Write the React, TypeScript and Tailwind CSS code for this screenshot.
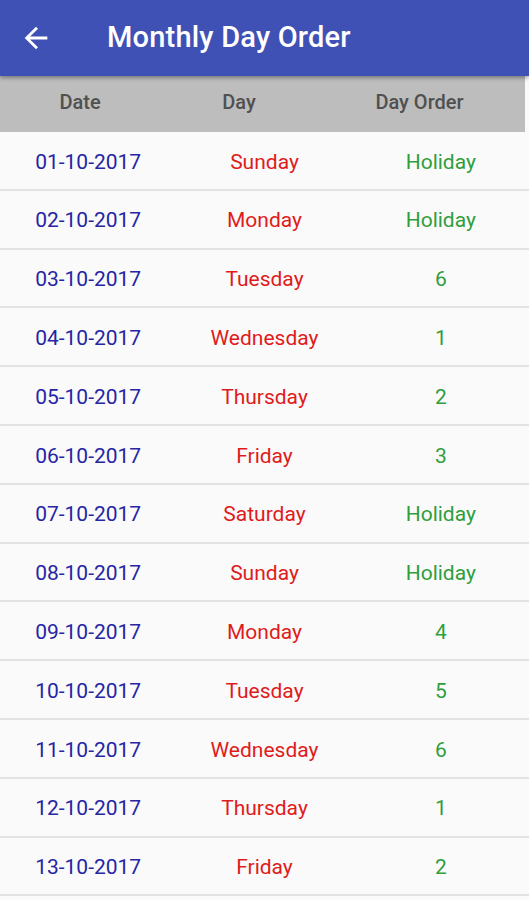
import React from 'react';

type Row = { date: string; day: string; order: string };

const rows: Row[] = [
  { date: '01-10-2017', day: 'Sunday', order: 'Holiday' },
  { date: '02-10-2017', day: 'Monday', order: 'Holiday' },
  { date: '03-10-2017', day: 'Tuesday', order: '6' },
  { date: '04-10-2017', day: 'Wednesday', order: '1' },
  { date: '05-10-2017', day: 'Thursday', order: '2' },
  { date: '06-10-2017', day: 'Friday', order: '3' },
  { date: '07-10-2017', day: 'Saturday', order: 'Holiday' },
  { date: '08-10-2017', day: 'Sunday', order: 'Holiday' },
  { date: '09-10-2017', day: 'Monday', order: '4' },
  { date: '10-10-2017', day: 'Tuesday', order: '5' },
  { date: '11-10-2017', day: 'Wednesday', order: '6' },
  { date: '12-10-2017', day: 'Thursday', order: '1' },
  { date: '13-10-2017', day: 'Friday', order: '2' },
];

const App: React.FC = () => {
  return (
    <div className="w-[529px] h-[900px] overflow-hidden bg-[#fafafa] font-['Roboto',sans-serif] select-none">
      {/* App bar */}
      <div className="relative z-10 h-[76px] bg-[#3f51b5] flex items-center shadow-[0_2px_4px_rgba(0,0,0,0.35)]">
        <div className="w-[72px] flex justify-center">
          <svg className="w-[34px] h-[34px] text-white" viewBox="0 0 24 24" fill="currentColor">
            <path d="M20 11H7.83l5.59-5.59L12 4l-8 8 8 8 1.41-1.41L7.83 13H20v-2z" />
          </svg>
        </div>
        <h1 className="ml-[35px] text-[29px] font-medium text-white tracking-[0.2px]">Monthly Day Order</h1>
      </div>

      {/* Column header */}
      <div className="w-[525px] h-[56px] pb-[4px] bg-[#bdbdbd] grid grid-cols-[160px_158px_1fr] items-center text-[20px] font-medium text-[#505050]">
        <div className="text-center">Date</div>
        <div className="text-center">Day</div>
        <div className="text-center pr-[4px]">Day Order</div>
      </div>

      {/* Rows */}
      {rows.map((r) => (
        <div
          key={r.date}
          className="h-[58.8px] pt-[4px] border-b-2 border-[#e3e3e3] grid grid-cols-3 items-center text-[21px]"
        >
          <div className="text-center text-[#2525a5]">{r.date}</div>
          <div className="text-center text-[#e01b1b]">{r.day}</div>
          <div className="text-center text-[#2f9e3c]">{r.order}</div>
        </div>
      ))}
    </div>
  );
};

export default App;
